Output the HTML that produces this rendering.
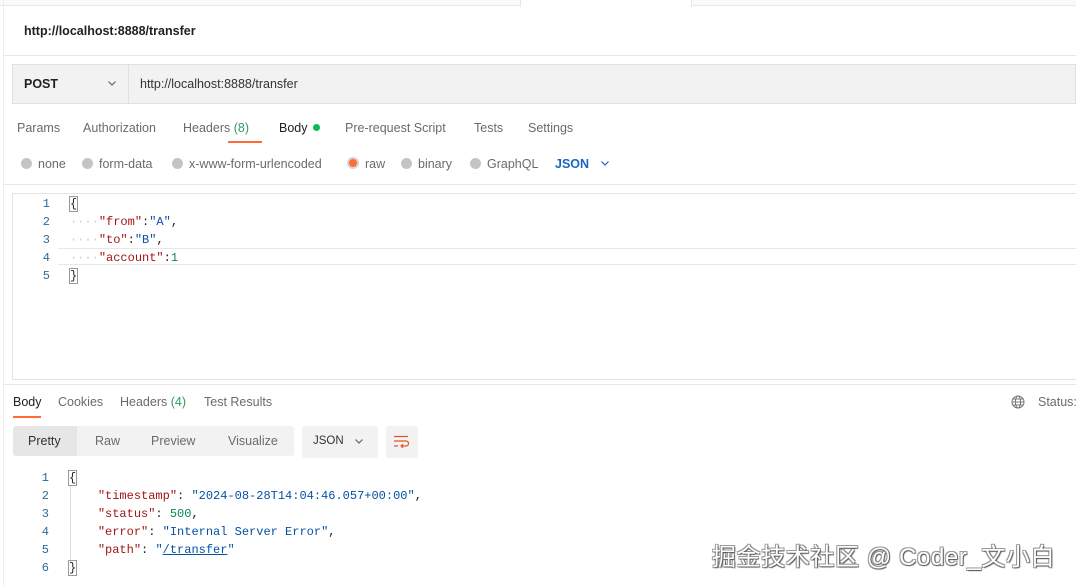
<!DOCTYPE html>
<html><head><meta charset="utf-8"><style>
*{margin:0;padding:0;box-sizing:border-box}
body{width:1076px;height:587px;overflow:hidden;background:#fff;font-family:"Liberation Sans",sans-serif;font-size:12.5px;color:#212121;position:relative}
.a{position:absolute;white-space:nowrap}
.mono{font-family:"Liberation Mono",monospace;font-size:12px}
.g{color:#6b6b6b}
.rad{display:inline-block;width:11px;height:11px;border-radius:50%;background:#c4c4c4;vertical-align:-1px;margin-right:6px}
</style></head><body>
<div class="a" style="left:0;top:0;width:1076px;height:6px;background:#fafafa;border-bottom:1px solid #e8e8e8"></div>
<div class="a" style="left:520px;top:0;width:172px;height:7px;background:#fff;border-left:1px solid #e8e8e8;border-right:1px solid #e8e8e8"></div>
<div class="a" style="left:3px;top:0;width:1px;height:587px;background:#ededed"></div>
<div class="a" style="left:24px;top:24px;font-size:12.5px;font-weight:bold;color:#212121">http://localhost:8888/transfer</div>
<div class="a" style="left:3px;top:55px;width:1073px;height:1px;background:#e8e8e8"></div>
<div class="a" style="left:12px;top:64px;width:1064px;height:40px;background:#f2f2f2;border:1px solid #e0e0e0"></div>
<div class="a" style="left:128px;top:65px;width:1px;height:38px;background:#e0e0e0"></div>
<div class="a" style="left:24px;top:77px;font-weight:bold;font-size:12.5px">POST</div>
<svg class="a" style="left:107px;top:79px" width="10" height="8"><path d="M1.5 2.5L5 6 8.5 2.5" fill="none" stroke="#666" stroke-width="1.2"/></svg>
<div class="a" style="left:140px;top:77px;color:#333">http://localhost:8888/transfer</div>
<div class="a g" style="left:17px;top:121px">Params</div>
<div class="a g" style="left:83px;top:121px">Authorization</div>
<div class="a g" style="left:183px;top:121px">Headers <span style="color:#2f9a62">(8)</span></div>
<div class="a" style="left:279px;top:121px">Body <span style="display:inline-block;width:7px;height:7px;border-radius:50%;background:#0cbb52;vertical-align:1px;margin-left:2px"></span></div>
<div class="a" style="left:228px;top:141px;width:34px;height:2px;background:#ff6c37"></div>
<div class="a g" style="left:345px;top:121px">Pre-request Script</div>
<div class="a g" style="left:474px;top:121px">Tests</div>
<div class="a g" style="left:528px;top:121px">Settings</div>
<div class="a g" style="left:21px;top:157px"><span class="rad"></span>none</div>
<div class="a g" style="left:82px;top:157px"><span class="rad"></span>form-data</div>
<div class="a g" style="left:172px;top:157px"><span class="rad"></span>x-www-form-urlencoded</div>
<div class="a g" style="left:347px;top:157px"><span class="rad" style="width:12px;height:12px;background:#ff6c37;border:2px solid #d4d4d4"></span>raw</div>
<div class="a g" style="left:401px;top:157px"><span class="rad"></span>binary</div>
<div class="a g" style="left:470px;top:157px"><span class="rad"></span>GraphQL</div>
<div class="a" style="left:555px;top:157px;color:#1a64c6;font-weight:bold">JSON</div>
<svg class="a" style="left:600px;top:159px" width="10" height="8"><path d="M1.5 2.5L5 6 8.5 2.5" fill="none" stroke="#1a64c6" stroke-width="1.2"/></svg>
<div class="a" style="left:3px;top:184px;width:1073px;height:1px;background:#e8e8e8"></div>
<div class="a" style="left:12px;top:193px;width:1064px;height:187px;border:1px solid #e4e4e4;border-right:none"></div>
<div class="a" style="left:58px;top:248px;width:1018px;height:17px;border-top:1px solid #e8e8e8;border-bottom:1px solid #e8e8e8"></div>
<div class="a mono" style="left:0;top:195px;width:50px;text-align:right;line-height:18px;color:#2a6c9a">1<br>2<br>3<br>4<br>5</div>
<div class="a mono" style="left:70px;top:195px;line-height:18px;color:#222"><span style="outline:1px solid #999">{</span><br><span style="color:#ccc">····</span><span style="color:#a31515">"from"</span>:<span style="color:#0451a5">"A"</span>,<br><span style="color:#ccc">····</span><span style="color:#a31515">"to"</span>:<span style="color:#0451a5">"B"</span>,<br><span style="color:#ccc">····</span><span style="color:#a31515">"account"</span>:<span style="color:#098658">1</span><br><span style="outline:1px solid #999">}</span></div>
<div class="a" style="left:3px;top:384px;width:1073px;height:1px;background:#e8e8e8"></div>
<div class="a" style="left:13px;top:395px">Body</div>
<div class="a" style="left:13px;top:416px;width:28px;height:2px;background:#ff6c37"></div>
<div class="a g" style="left:58px;top:395px">Cookies</div>
<div class="a g" style="left:120px;top:395px">Headers <span style="color:#2f9a62">(4)</span></div>
<div class="a g" style="left:204px;top:395px">Test Results</div>
<svg class="a" style="left:1011px;top:395px" width="14" height="14" fill="none" stroke="#777" stroke-width="1"><circle cx="7" cy="7" r="6"/><ellipse cx="7" cy="7" rx="2.6" ry="6"/><path d="M1 7h12M2 4h10M2 10h10"/></svg>
<div class="a g" style="left:1038px;top:395px">Status:</div>
<div class="a" style="left:13px;top:426px;width:281px;height:30px;background:#f2f2f2;border-radius:3px"></div>
<div class="a" style="left:13px;top:426px;width:64px;height:30px;background:#e6e6e6;border-radius:3px 0 0 3px"></div>
<div class="a" style="left:28px;top:434px;color:#333">Pretty</div>
<div class="a g" style="left:95px;top:434px">Raw</div>
<div class="a g" style="left:151px;top:434px">Preview</div>
<div class="a g" style="left:228px;top:434px">Visualize</div>
<div class="a" style="left:302px;top:426px;width:76px;height:32px;background:#f2f2f2;border-radius:3px"></div>
<div class="a" style="left:313px;top:435px;font-size:11.5px;color:#333">JSON</div>
<svg class="a" style="left:354px;top:437px" width="10" height="8"><path d="M1.5 2.5L5 6 8.5 2.5" fill="none" stroke="#666" stroke-width="1.2"/></svg>
<div class="a" style="left:386px;top:426px;width:32px;height:32px;background:#f2f2f2;border-radius:3px"></div>
<svg class="a" style="left:393px;top:434px" width="18" height="16" fill="none" stroke="#e0562a" stroke-width="1.2"><path d="M1 2.5h14M1 7h12a2.5 2.5 0 0 1 0 5H8M10 10l-2 2 2 2M1 12h4"/></svg>
<div class="a mono" style="left:0;top:469px;width:49px;text-align:right;line-height:18px;color:#2a6c9a">1<br>2<br>3<br>4<br>5<br>6</div>
<div class="a" style="left:70px;top:485px;width:1px;height:77px;background:#ddd"></div>
<div class="a mono" style="left:69px;top:469px;line-height:18px;color:#222"><span style="outline:1px solid #999">{</span><br>&nbsp;&nbsp;&nbsp;&nbsp;<span style="color:#a31515">"timestamp"</span>: <span style="color:#0451a5">"2024-08-28T14:04:46.057+00:00"</span>,<br>&nbsp;&nbsp;&nbsp;&nbsp;<span style="color:#a31515">"status"</span>: <span style="color:#098658">500</span>,<br>&nbsp;&nbsp;&nbsp;&nbsp;<span style="color:#a31515">"error"</span>: <span style="color:#0451a5">"Internal Server Error"</span>,<br>&nbsp;&nbsp;&nbsp;&nbsp;<span style="color:#a31515">"path"</span>: <span style="color:#0451a5">"<u>/transfer</u>"</span><br><span style="outline:1px solid #999">}</span></div>
<div class="a" style="left:712px;top:537px;font-family:'Liberation Sans','Noto Sans CJK SC',sans-serif;font-size:24px;letter-spacing:0.6px;color:#fff;text-shadow:1px 1px 1px #555,-1px -1px 0 #999,1px -1px 0 #999,-1px 1px 0 #999">掘金技术社区 @ Coder_文小白</div>
</body></html>
